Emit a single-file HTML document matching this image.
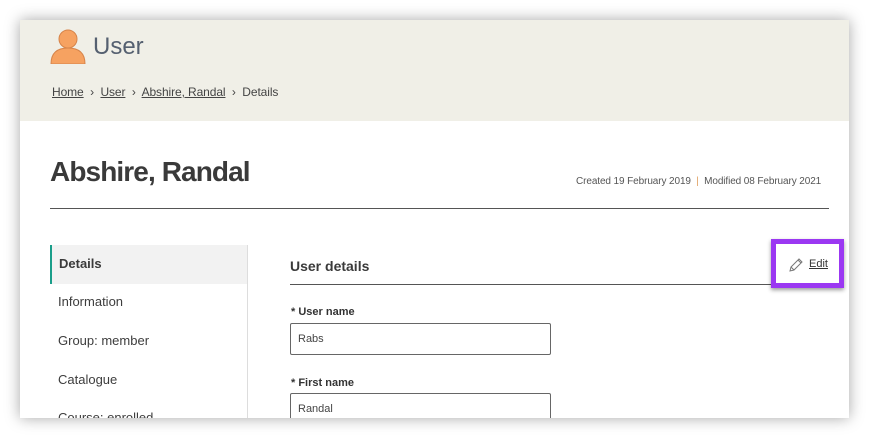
<!DOCTYPE html>
<html><head><meta charset="utf-8"><style>
*{margin:0;padding:0;box-sizing:border-box}
body{width:870px;height:439px;background:#fff;position:relative;overflow:hidden;font-family:"Liberation Sans",sans-serif;color:#3d3d3d}
.page{position:absolute;left:20px;top:20px;width:829px;height:398px;background:#fff;box-shadow:0 0 14px rgba(0,0,0,.35);overflow:hidden}
.hdr{position:absolute;left:0;top:0;width:829px;height:101px;background:#f0efe7}
.a{position:absolute;white-space:nowrap}
u{text-decoration:underline}
</style></head><body>
<div class="page">
<div class="hdr">
<svg class="a" style="left:30px;top:8px" width="36" height="36" viewBox="0 0 36 36"><circle cx="18" cy="11" r="9" fill="#f6a261" stroke="#d6844a" stroke-width="1"/><path d="M1 36 C1 24 8 20 18 20 C28 20 35 24 35 36 Z" fill="#f6a261" stroke="#d6844a" stroke-width="1"/></svg>
<div class="a" style="left:73px;top:13px;font-size:24px;color:#556070">User</div>
<div class="a" style="left:32px;top:65px;font-size:12px;color:#444;letter-spacing:-.1px"><u>Home</u> &nbsp;›&nbsp; <u>User</u> &nbsp;›&nbsp; <u>Abshire, Randal</u> &nbsp;›&nbsp; Details</div>
</div>
<div class="a" style="left:30px;top:136px;font-size:28px;font-weight:bold;color:#3a3a3a;letter-spacing:-.9px">Abshire, Randal</div>
<div class="a" style="left:556px;top:156px;font-size:10px;color:#555;letter-spacing:-.1px">Created 19 February 2019 &nbsp;<span style="color:#e0a060">|</span>&nbsp; Modified 08 February 2021</div>
<div class="a" style="left:30px;top:188px;width:779px;height:1px;background:#555"></div>
<div class="a" style="left:30px;top:225px;width:197px;height:39px;background:#f2f2f2;border-left:2px solid #1a9e8a"></div>
<div class="a" style="left:227px;top:225px;width:1px;height:180px;background:#ddd"></div>
<div class="a" style="left:39px;top:236px;font-size:13px;font-weight:bold;color:#3a3a3a">Details</div>
<div class="a" style="left:38px;top:274px;font-size:13px">Information</div>
<div class="a" style="left:38px;top:313px;font-size:13px">Group: member</div>
<div class="a" style="left:38px;top:352px;font-size:13px">Catalogue</div>
<div class="a" style="left:38px;top:390px;font-size:13px">Course: enrolled</div>
<div class="a" style="left:270px;top:238px;font-size:14px;font-weight:bold;color:#3a3a3a">User details</div>
<div class="a" style="left:270px;top:264px;width:482px;height:1px;background:#555"></div>
<div class="a" style="left:751px;top:219px;width:73px;height:49px;border:5px solid #9b38f2;box-shadow:0 2px 4px rgba(0,0,0,.4)"></div>
<svg class="a" style="left:768px;top:237px" width="16" height="16" viewBox="0 0 16 16"><path d="M2 14 L3 10 L11 2 L14 5 L6 13 Z M3 10 L6 13 M10 3 L13 6" fill="none" stroke="#777" stroke-width="1"/></svg>
<div class="a" style="left:789px;top:238px;font-size:11px;color:#333"><u>Edit</u></div>
<div class="a" style="left:271px;top:286px;font-size:11px;font-weight:bold;color:#333">* User name</div>
<div class="a" style="left:270px;top:303px;width:261px;height:32px;border:1px solid #666;border-radius:2px;font-size:11px;padding:9px 7px;color:#444">Rabs</div>
<div class="a" style="left:271px;top:357px;font-size:11px;font-weight:bold;color:#333">* First name</div>
<div class="a" style="left:270px;top:373px;width:261px;height:32px;border:1px solid #666;border-radius:2px;font-size:11px;padding:9px 7px;color:#444">Randal</div>
</div>
</body></html>
